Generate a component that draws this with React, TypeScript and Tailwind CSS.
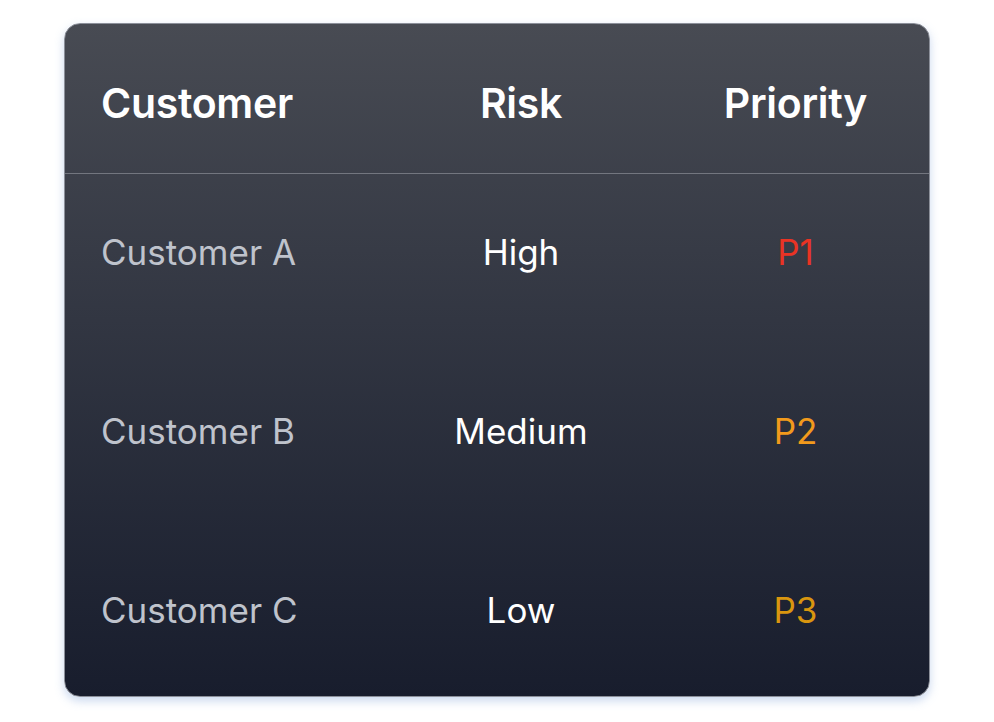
import React from 'react';

type Row = {
  name: string;
  risk: string;
  priority: string;
  color: string;
};

const rows: Row[] = [
  { name: 'Customer A', risk: 'High', priority: 'P1', color: 'text-[#ea3324]' },
  { name: 'Customer B', risk: 'Medium', priority: 'P2', color: 'text-[#f29a1c]' },
  { name: 'Customer C', risk: 'Low', priority: 'P3', color: 'text-[#d9960f]' },
];

export default function App() {
  return (
    <div className="w-[994px] h-[722px] bg-white flex items-start justify-start pt-[23px] pl-[64px] font-['Inter','Liberation_Sans',sans-serif]">
      <div className="w-[866px] h-[674px] rounded-[16px] border border-[#8c909a] bg-gradient-to-b from-[#484b53] to-[#181d2d] shadow-[0_4px_10px_rgba(140,170,220,0.45)] overflow-hidden flex flex-col">
        {/* Header */}
        <div className="h-[150px] border-b border-[#73767f] px-[36px] pt-[10px] grid grid-cols-[243px_354px_1fr] items-center text-white font-semibold text-[41px] tracking-[-0.3px]">
          <div>Customer</div>
          <div className="text-center">Risk</div>
          <div className="text-center">Priority</div>
        </div>

        {/* Body */}
        <div className="flex-1 px-[36px] pt-[28px] flex flex-col gap-[79px]">
          {rows.map((r) => (
            <div key={r.name} className="h-[100px] grid grid-cols-[243px_354px_1fr] items-center text-[35px]">
              <div className="text-[#bfc3cc]">{r.name}</div>
              <div className="text-center text-white">{r.risk}</div>
              <div className={`text-center ${r.color}`}>{r.priority}</div>
            </div>
          ))}
        </div>
      </div>
    </div>
  );
}
